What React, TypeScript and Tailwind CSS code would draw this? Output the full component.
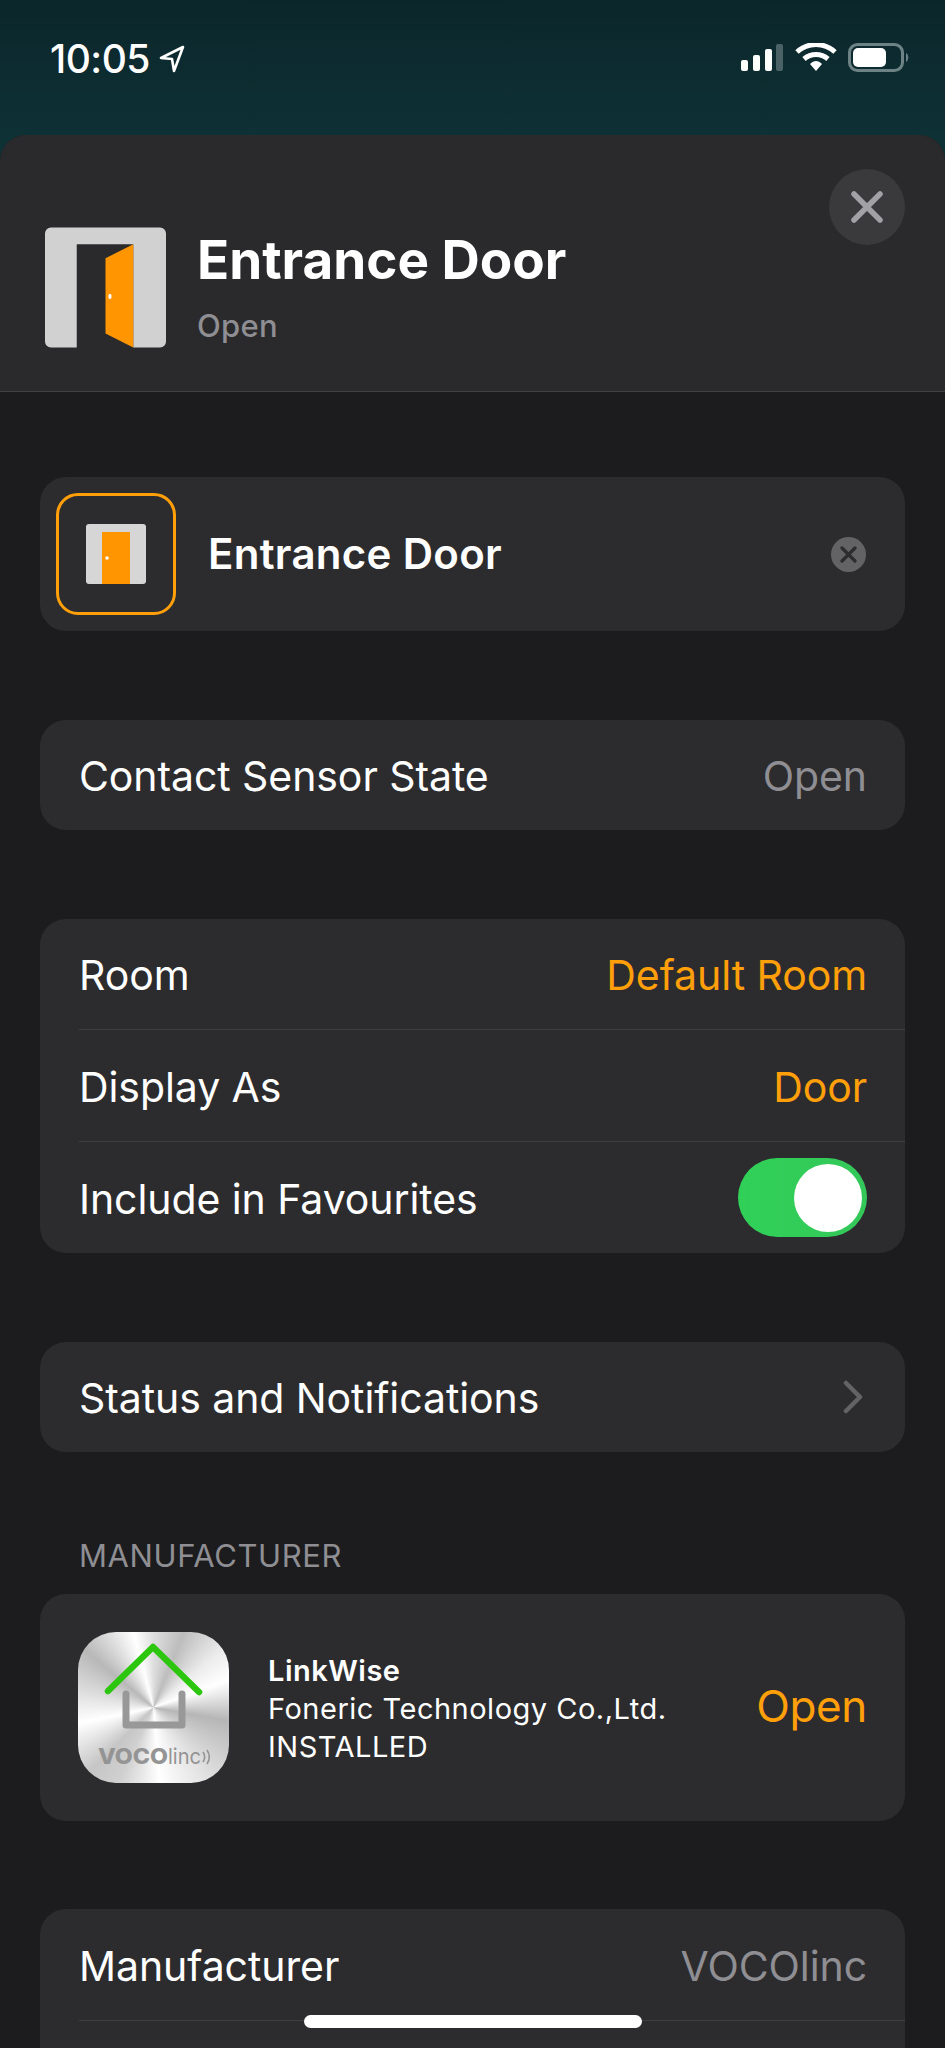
import { ReactNode } from 'react'

function StatusBar() {
  return (
    <div className="flex h-[135px] shrink-0 items-start justify-between bg-gradient-to-b from-[#0b262b] to-[#0e3135] pt-[35px] pr-[32px] pl-[50px]">
      <div className="flex items-center gap-[9px] text-white">
        <span className="text-[39px] leading-[47px] font-medium tracking-[-0.5px]">10:05</span>
        <svg width="26" height="28" viewBox="0 0 26 28" fill="none" stroke="white" strokeWidth="2.6" strokeLinejoin="round">
          <path d="M24 2 L2 13 L13 14 L15 26 Z" />
        </svg>
      </div>
      <div className="flex items-center pt-[8px]">
        <svg width="172" height="30" viewBox="0 0 172 30">
          <rect x="0" y="17" width="7" height="11" rx="2" fill="white" />
          <rect x="12" y="12" width="7" height="16" rx="2" fill="white" />
          <rect x="24" y="6" width="7" height="22" rx="2" fill="white" />
          <rect x="35" y="1" width="7" height="27" rx="2" fill="#4a6265" />
          <path d="M56 9 C67 -1 83 -1 94 9" fill="none" stroke="white" strokeWidth="5" />
          <path d="M63 16 C70 10 80 10 87 16" fill="none" stroke="white" strokeWidth="5" />
          <path d="M69 21 C73 17 77 17 81 21 L75 28 Z" fill="white" />
          <rect x="108.5" y="1.5" width="53" height="26" rx="8" fill="none" stroke="#6d8285" strokeWidth="3" />
          <rect x="112" y="5" width="33" height="19" rx="5" fill="white" />
          <path d="M165 10 C168 11 168 18 165 19 Z" fill="#6d8285" />
        </svg>
      </div>
    </div>
  )
}

function LargeDoor() {
  return (
    <svg width="121" height="121" viewBox="0 0 122 121" className="shrink-0">
      <path d="M6 0 H116 A6 6 0 0 1 122 6 V115 A6 6 0 0 1 116 121 H89 V17 H32 V121 H6 A6 6 0 0 1 0 115 V6 A6 6 0 0 1 6 0 Z" fill="#d1d1d1" />
      <path d="M89 17 L61 31 V107 L89 121 Z" fill="#ff9500" />
      <rect x="64" y="67" width="3" height="5" rx="1.5" fill="white" />
    </svg>
  )
}

function SmallDoor() {
  return (
    <svg width="60" height="60" viewBox="0 0 60 60">
      <rect width="60" height="60" rx="3" fill="#d6d6d6" />
      <rect x="16" y="8" width="28" height="52" fill="#ff9500" />
      <circle cx="21" cy="34" r="1.8" fill="white" />
    </svg>
  )
}

function VocoIcon() {
  return (
    <div className="h-[151px] w-[151px] shrink-0 overflow-hidden rounded-[38px] bg-[conic-gradient(from_0deg,#dedede_0deg,#bdbdbd_22deg,#ececec_50deg,#ffffff_70deg,#b6b6b6_100deg,#e4e4e4_145deg,#ffffff_175deg,#d0d0d0_205deg,#c6c6c6_225deg,#ffffff_258deg,#d4d4d4_290deg,#b8b8b8_310deg,#ffffff_345deg,#dedede_360deg)]">
      <svg width="151" height="151" viewBox="0 0 151 151">
        <path d="M48 62 V93 H104 V62" fill="none" stroke="#989898" strokeWidth="7" strokeLinecap="round" strokeLinejoin="round" />
        <path d="M30 59 L75 15 L121 60" fill="none" stroke="#2dc60e" strokeWidth="6.5" strokeLinecap="round" strokeLinejoin="round" />
        <text x="20" y="132" fontFamily="Inter" fontWeight="800" fontSize="22" fill="#949494" textLength="70" lengthAdjust="spacingAndGlyphs">VOCO</text>
        <text x="90" y="132" fontFamily="Inter" fontWeight="400" fontSize="22" fill="#949494" textLength="33" lengthAdjust="spacingAndGlyphs">linc</text>
        <path d="M125 120 C127 123 127 127 125 130 M129 118 C132 122 132 128 129 132" fill="none" stroke="#949494" strokeWidth="1.6" />
      </svg>
    </div>
  )
}

function Row({ label, h, border, children }: { label: string; h: string; border?: boolean; children?: ReactNode }) {
  return (
    <div className="pl-[39px]">
      <div className={`flex items-center justify-between pr-[38px] ${h} ${border ? 'border-b border-[#3f3f42]' : ''}`}>
        <span className="pt-[4px] text-[41px] tracking-[-0.08px] text-white">{label}</span>
        {children}
      </div>
    </div>
  )
}

function Value({ orange, children }: { orange?: boolean; children: ReactNode }) {
  return <span className={`pt-[4px] text-[41px] tracking-[-0.08px] ${orange ? 'text-[#ff9f0a]' : 'text-[#8e8e93]'}`}>{children}</span>
}

export default function App() {
  return (
    <div className="relative flex h-[2048px] w-[945px] flex-col overflow-hidden bg-[#0e3135] font-['Inter',sans-serif]">
      <StatusBar />

      <div className="flex-1 overflow-hidden rounded-t-[26px] bg-[#1c1c1e]">
        <div className="relative flex h-[257px] gap-[31px] border-b border-[#404042] bg-[#2a2a2c] pt-[92px] pl-[45px]">
          <LargeDoor />
          <div>
            <div className="mt-[2px] text-[53px] leading-[62px] font-bold text-white">Entrance Door</div>
            <div className="mt-[16px] text-[31px] leading-[38px] font-medium tracking-[0.3px] text-[#8e8e93]">Open</div>
          </div>
          <button className="absolute top-[34px] right-[40px] flex h-[76px] w-[76px] items-center justify-center rounded-full bg-[#3a3a3c]">
            <svg width="32" height="32" viewBox="0 0 32 32" fill="none" stroke="#a1a1a6" strokeWidth="5.5" strokeLinecap="round">
              <path d="M3 3 L29 29 M29 3 L3 29" />
            </svg>
          </button>
        </div>

        <div className="px-[40px]">
          <div className="mt-[85px] flex h-[154px] items-center rounded-[26px] bg-[#2c2c2e] pr-[39px] pl-[16px]">
            <div className="flex h-[122px] w-[120px] shrink-0 items-center justify-center rounded-[22px] border-[3px] border-[#ff9f0a]">
              <SmallDoor />
            </div>
            <span className="mb-[2px] ml-[32px] flex-1 text-[42px] font-semibold tracking-[0.3px] text-white">Entrance Door</span>
            <div className="flex h-[35px] w-[35px] items-center justify-center rounded-full bg-[#636366]">
              <svg width="17" height="17" viewBox="0 0 17 17" fill="none" stroke="#2c2c2e" strokeWidth="3.2" strokeLinecap="round">
                <path d="M2 2 L15 15 M15 2 L2 15" />
              </svg>
            </div>
          </div>

          <div className="mt-[89px] overflow-hidden rounded-[26px] bg-[#2c2c2e]">
            <Row label="Contact Sensor State" h="h-[110px]">
              <Value>Open</Value>
            </Row>
          </div>

          <div className="mt-[89px] overflow-hidden rounded-[26px] bg-[#2c2c2e]">
            <Row label="Room" h="h-[111px]" border>
              <Value orange>Default Room</Value>
            </Row>
            <Row label="Display As" h="h-[112px]" border>
              <Value orange>Door</Value>
            </Row>
            <Row label="Include in Favourites" h="h-[111px]">
              <div className="flex h-[79px] w-[129px] items-center justify-end rounded-full bg-gradient-to-r from-[#30d158] to-[#34c759] pr-[5px]">
                <div className="h-[68px] w-[68px] rounded-full bg-white" />
              </div>
            </Row>
          </div>

          <div className="mt-[89px] overflow-hidden rounded-[26px] bg-[#2c2c2e]">
            <Row label="Status and Notifications" h="h-[110px]">
              <svg width="20" height="34" viewBox="0 0 20 34" fill="none" stroke="#636366" strokeWidth="4.5" strokeLinecap="round" strokeLinejoin="round" className="mr-[4px]">
                <path d="M3 3 L17 17 L3 31" />
              </svg>
            </Row>
          </div>

          <div className="pt-[86px] pb-[20px] pl-[39px] text-[31px] leading-[36px] tracking-[0.6px] text-[#8e8e93]">MANUFACTURER</div>

          <div className="flex h-[227px] items-center rounded-[26px] bg-[#2c2c2e] pr-[38px] pl-[38px]">
            <VocoIcon />
            <div className="mt-[2px] ml-[39px] flex-1 text-[29px] leading-[38px] tracking-[0.5px] text-white">
              <div className="font-semibold">LinkWise</div>
              <div>Foneric Technology Co.,Ltd.</div>
              <div>INSTALLED</div>
            </div>
            <span className="mb-[3px] text-[44px] tracking-[-0.35px] text-[#ff9f0a]">Open</span>
          </div>

          <div className="mt-[88px] rounded-t-[26px] bg-[#2c2c2e] pb-[60px]">
            <Row label="Manufacturer" h="h-[112px]" border>
              <Value>VOCOlinc</Value>
            </Row>
          </div>
        </div>
      </div>

      <div className="absolute bottom-[20px] left-[304px] h-[13px] w-[338px] rounded-full bg-white" />
    </div>
  )
}
